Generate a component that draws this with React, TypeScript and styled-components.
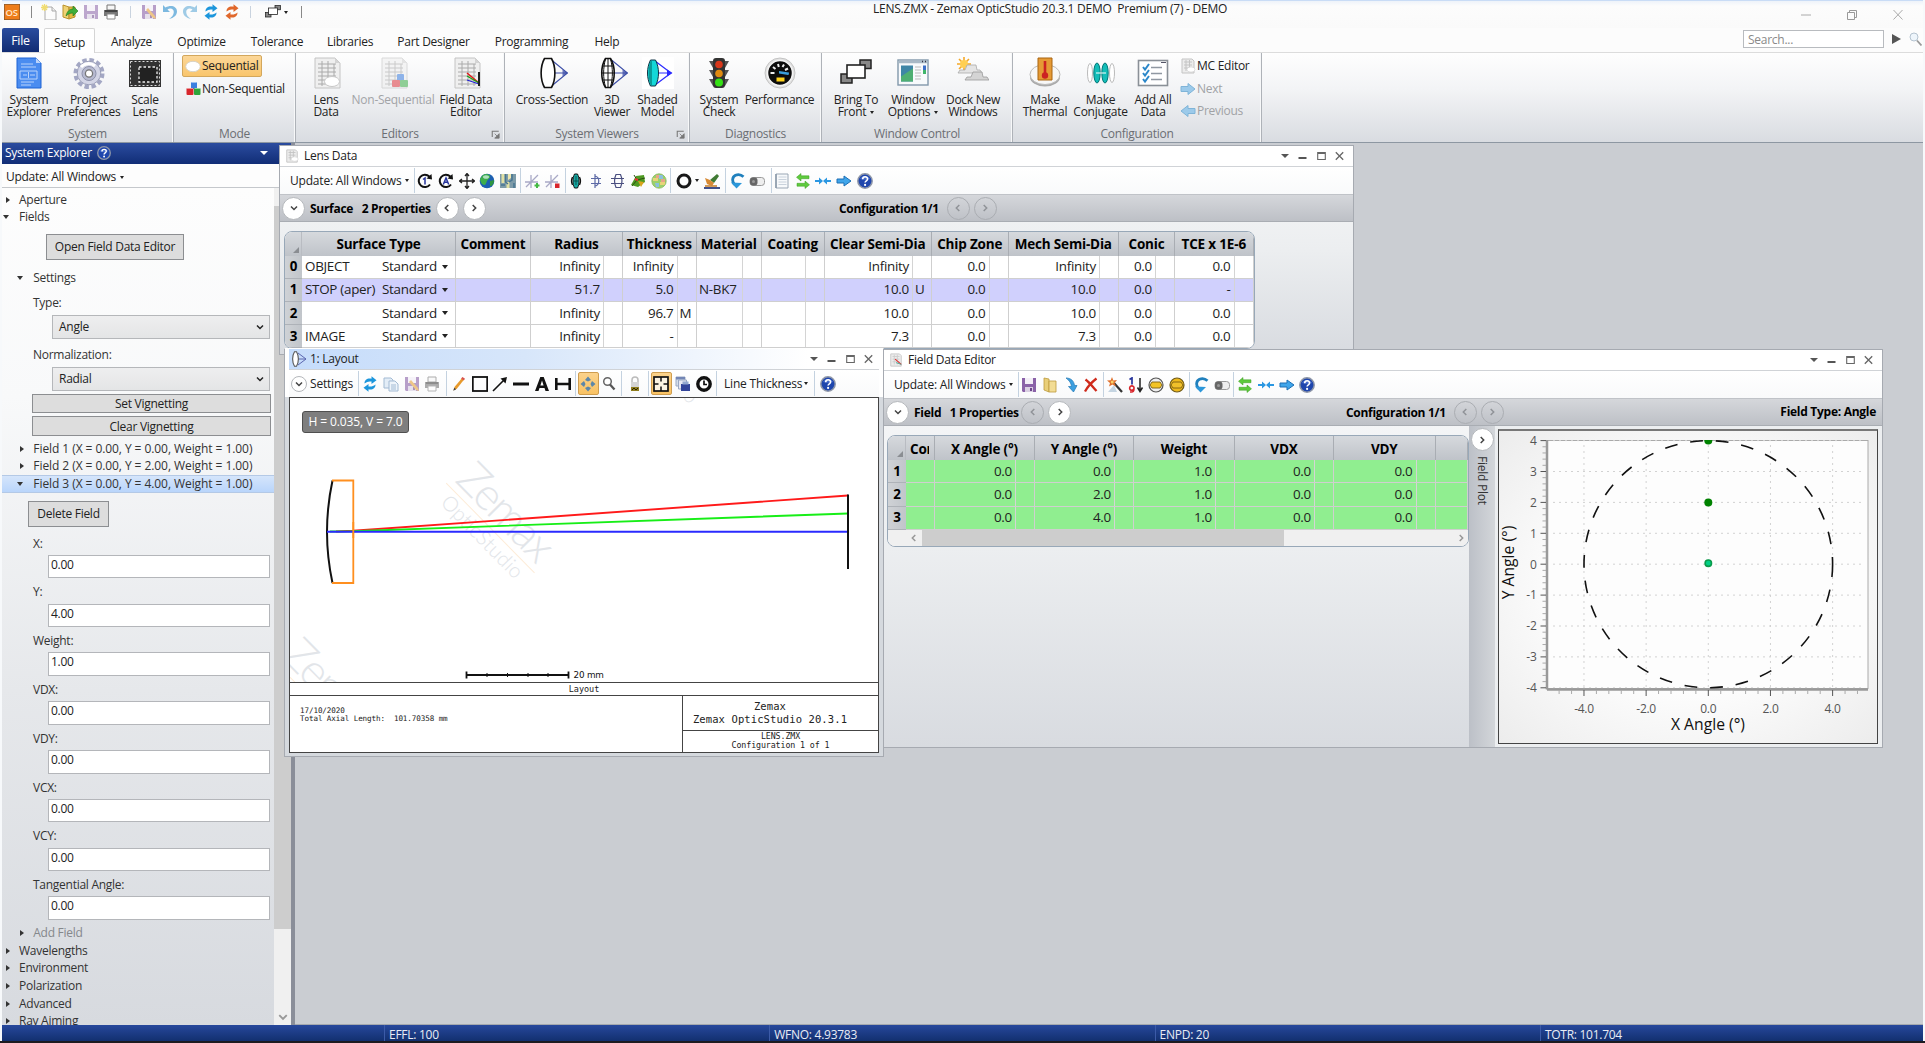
import React from "react";
import styled, { createGlobalStyle, css } from "styled-components";

const Global = createGlobalStyle`
  *, *::before, *::after { box-sizing: border-box; }
  html, body { margin: 0; padding: 0; overflow: hidden; }
  body {
    background: #fff;
    color: #222;
    font-family: "Open Sans", "Noto Sans", sans-serif;
    font-size: 12px;
    letter-spacing: -0.27px;
    line-height: 1;
  }
  svg { display: block; flex: none; }
`;

/* ---------- icons ---------- */

const grid = (
  <>
    <path d="M5 1h20l5 5v25H5z" fill="#efefef" stroke="#c4c4c4" />
    <path d="M25 1l5 5h-5z" fill="#d4d4d4" />
    <path d="M8 7h18M8 11h18M8 15h18M8 19h18M8 23h18M8 27h18M12 4v25M18 4v25M24 7v22" stroke="#aaa" strokeWidth="1" fill="none" />
  </>
);

const disk = (
  <>
    <path d="M1 1h14v14H2l-1-1z" fill="#8a62a8" />
    <path d="M4 1h8v6H4z" fill="#f3eef7" />
    <path d="M4 10h8v5H4z" fill="#d9cfe2" />
    <path d="M9 11h2v3H9z" fill="#6d478b" />
  </>
);

const printer = (
  <>
    <path d="M4 1h8v5H4z" fill="#f6f6f6" stroke="#777" />
    <path d="M1 6h14v6H1z" fill="#777" />
    <path d="M2 6h12v2H2z" fill="#444" />
    <path d="M4 10h8v5H4z" fill="#fff" stroke="#888" />
  </>
);

const refreshPair = (c: string) => (
  <g fill={c}>
    <path d="M2.500 7.500C2.500 3.500 6 1.800 9.500 2.800V.3L14.500 4.300 9.500 8V5.600C7 5 5 5.600 2.500 7.500z" />
    <path d="M13.500 8.500C13.500 12.500 10 14.200 6.500 13.200v2.500L1.500 11.700 6.500 8v2.400C9 11 11 10.400 13.500 8.500z" />
  </g>
);

const turnBack = (
  <>
    <path d="M14.500 3.800C12 1.500 9 1.200 6.500 2.300 3 4 2.800 8.500 5.500 11.500" stroke="#2080bd" strokeWidth="2.800" fill="none" />
    <path d="M2 9.500L13 10 7.500 15.500z" fill="#2c97da" />
  </>
);

const toggle = (
  <>
    <rect x="1" y="4.500" width="14.500" height="8" rx="3" fill="#eee" stroke="#999" />
    <rect x="1" y="4.500" width="7.500" height="8" rx="3" fill="#666" />
    <circle cx="4.500" cy="8.500" r="1.500" fill="#999" />
  </>
);

const lensRays = (c: string) => (
  <g stroke={c} fill="none">
    <path d="M12 3l16 13-16 13M12 16h16" strokeWidth="1.200" />
    <path d="M23 12.500l5.500 3.500-5.500 3.500z" fill={c} stroke="none" opacity=".75" />
  </g>
);

const cubes = (
  <>
    <rect x="6" y="1" width="6" height="7" rx="1" fill="#3b7fe0" />
    <rect x="1.500" y="7" width="7" height="7" rx="1" fill="#d8262c" />
    <rect x="9" y="7" width="6.500" height="7" rx="1" fill="#2fa53b" />
    <path d="M2 7.500h6M9.500 7.500h5.500M6.500 1.500h5" stroke="#fff" opacity=".5" />
  </>
);

const help = (
  <>
    <circle cx="8" cy="8" r="7.200" fill="#1f46ad" stroke="#8f97a8" strokeWidth="1.500" />
    <path d="M3 6a5.500 5 0 0 1 10 0c-3 1-7 1-10 0z" fill="#5b80da" opacity=".7" />
    <path d="M5.700 6.200c0-3.200 4.900-3.100 4.900-.2 0 1.800-2.500 1.800-2.500 3.600" stroke="#fff" strokeWidth="1.600" fill="none" />
    <circle cx="8.100" cy="11.900" r="1.100" fill="#fff" />
  </>
);

const swirl = (
  <>
    <path d="M12.300 3.500A6.200 6.200 0 1 0 13 11.500" stroke="#111" strokeWidth="2" fill="none" />
    <path d="M9.500 5.500L15 6.500 14.500 1z" fill="#111" />
  </>
);

const windowsStack = (
  <>
    <rect x="20" y="3" width="11" height="8.500" fill="#888" stroke="#222" strokeWidth="1.500" />
    <rect x="1" y="17" width="11" height="9" fill="#888" stroke="#222" strokeWidth="1.500" />
    <rect x="7" y="8" width="18" height="13" fill="#fff" stroke="#222" strokeWidth="1.600" />
  </>
);

const I32: Record<string, React.ReactNode> = {
  explorer: (
    <>
      <path d="M4 1h19l5 5v25H4z" fill="#4a8cf0" stroke="#1d62d4" />
      <path d="M23 1v5h5z" fill="#bcd4fa" />
      <path d="M8 7h12M8 10h15M7 14h17v8H7zM10 18h4m3 0h5M15.500 15v6M8 25h13M8 28h10" stroke="#b9d3fb" fill="none" />
    </>
  ),
  gear: (
    <>
      <circle cx="16" cy="16.500" r="13.500" fill="none" stroke="#a3a7c4" strokeWidth="4" strokeDasharray="4.400 2.668" />
      <circle cx="16" cy="16" r="11.800" fill="#d3d5e6" stroke="#9a9eb8" />
      <path d="M8 10a10 10 0 0 1 14-1" stroke="#fff" strokeWidth="3" fill="none" />
      <circle cx="16" cy="16.500" r="7" fill="#b7bad0" stroke="#8d91ab" />
      <circle cx="16" cy="16.500" r="3.600" fill="#fff" stroke="#777" strokeWidth="1.300" />
    </>
  ),
  scale: (
    <>
      <rect x="0" y="3" width="32" height="27" fill="#333" />
      <rect x="1.500" y="4.500" width="29" height="24" fill="none" stroke="#ddd" strokeDasharray="2 2" />
      <rect x="10" y="10" width="18" height="15" fill="#222" stroke="#eee" strokeWidth="1.300" strokeDasharray="2.500 2" />
    </>
  ),
  lensData: (
    <>
      {grid}
      <ellipse cx="22" cy="24.500" rx="7.500" ry="5" fill="#fff" stroke="#c8c8c8" />
    </>
  ),
  nsData: (
    <g opacity=".6">
      {grid}
      <rect x="20" y="17" width="7" height="7" rx="1" fill="#4a86e0" />
      <rect x="15" y="23" width="8" height="7" rx="1" fill="#e0464c" />
      <rect x="23" y="23" width="8" height="7" rx="1" fill="#4db556" />
    </g>
  ),
  fieldData: (
    <>
      {grid}
      <path d="M17 16l12 10" stroke="#e01818" strokeWidth="1.600" />
      <path d="M17 19l12 7" stroke="#18a018" strokeWidth="1.400" />
      <path d="M17 23l12 4" stroke="#2020d0" strokeWidth="1.200" />
      <path d="M29 15v14" stroke="#222" strokeWidth="2" />
    </>
  ),
  cross: (
    <g transform="translate(3.500 0)">
      {lensRays("#3d4fa8")}
      <path d="M5 1.500h7c4.500 8 4.500 21 0 29H5c-4.500-8-4.500-21 0-29z" fill="#fff" stroke="#111" strokeWidth="1.600" />
    </g>
  ),
  viewer3d: (
    <g transform="translate(3.500 0)">
      {lensRays("#3d4fa8")}
      <path d="M6 1.500h5c5 8 5 21 0 29H6c-5-8-5-21 0-29z" fill="#fff" stroke="#111" strokeWidth="1.600" />
      <path d="M6 2c-2.500 9-2.500 19 0 28M11 2c2.500 9 2.500 19 0 28M2.500 9h12M2 16h13M2.500 23h12M8.500 2v28" stroke="#111" fill="none" />
    </g>
  ),
  shaded: (
    <>
      <rect x="0" y="0" width="32" height="32" fill="#fff" />
      <path d="M13 4l16 12-16 12M13 16h16" stroke="#2a2aff" strokeWidth="1.200" fill="none" />
      <path d="M25 12.500l5.500 3.500-5.500 3.500z" fill="#2a2aff" />
      <path d="M8.500 3h5c4 8 4 18 0 26h-5C4.500 21 4.500 11 8.500 3z" fill="#14d8d8" stroke="#134" />
      <path d="M8.500 4c-2.500 8-2.500 16 0 24h1.500V4z" fill="#0b9b99" />
    </>
  ),
  traffic: (
    <>
      <path d="M6 4h20l-4 7H10zM6 13h20l-4 7H10zM6 22h20l-4 7H10z" fill="#555" />
      <rect x="10" y="1" width="12" height="30" rx="3" fill="#333" />
      <circle cx="16" cy="7.500" r="3.800" fill="#d8381c" />
      <circle cx="16" cy="16.500" r="3.800" fill="#e08a10" />
      <circle cx="16" cy="25.500" r="4" fill="#35e015" />
    </>
  ),
  gauge: (
    <>
      <circle cx="16" cy="16" r="15" fill="#e2e2e2" stroke="#c4c4c4" />
      <circle cx="16" cy="16" r="12.500" fill="#0c0c0c" stroke="#f5f5f5" strokeWidth="1.500" />
      <path d="M6.500 16h4M9 10l2.500 2M14 7l.8 3M20 7.500L18.500 10M24 11.500l-3 1.500" stroke="#eee" strokeWidth="2" />
      <path d="M15 14l10 1.500c0 2-.5 2.500-1 2.500l-9-1.500z" fill="#3a9dd8" />
      <rect x="12.500" y="20.500" width="8" height="4" fill="#ffd21a" />
    </>
  ),
  front: windowsStack,
  winOptions: (
    <>
      <rect x="1" y="3" width="30" height="25" fill="#f8fafc" stroke="#8298ab" strokeWidth="1.400" />
      <path d="M1.500 5h29" stroke="#a9b9c6" strokeWidth="2.500" />
      <path d="M25 4.500h1m2 0h1" stroke="#334" strokeWidth="1.500" />
      <rect x="4" y="8.500" width="12" height="16" fill="#3f86a6" />
      <path d="M4 24.500v-5l12-8v13z" fill="#4faf72" />
      <path d="M18 10h6M18 13h6M18 16h6M18 19h6M18 22h6" stroke="#bbb" />
      <path d="M26 8.500h3v8h-3z" fill="#3d6fc8" />
      <path d="M26 13h3v4h-3z" fill="#3fb56a" />
    </>
  ),
  dock: (
    <>
      <path d="M7 0v14M0 7h14M2 2l10 10M12 2L2 12" stroke="#f5a928" strokeWidth="1.600" />
      <circle cx="7" cy="7" r="4" fill="#ffcf52" />
      <path d="M1 16l2-3h5l2-5h9l1 5h3l2 3z" fill="#e4e4e4" stroke="#aaa" strokeWidth=".8" />
      <path d="M8 23l2-3h4l2-5h9l1 5h4l2 3z" fill="#d4d4d4" stroke="#999" strokeWidth=".8" />
    </>
  ),
  thermal: (
    <>
      <ellipse cx="16" cy="20" rx="15" ry="9.500" fill="#aaa" />
      <ellipse cx="16" cy="17.500" rx="15" ry="10" fill="#f7f7f7" stroke="#bbb" />
      <path d="M9 1h14v22H9z" fill="#e59a35" stroke="#a96410" />
      <path d="M16 4v14" stroke="#c22" strokeWidth="2.600" />
      <circle cx="16" cy="18.500" r="3.200" fill="#c22" />
    </>
  ),
  conjugate: (
    <g stroke="#999">
      <ellipse cx="5" cy="16" rx="2.500" ry="9.500" fill="#fff" stroke="#bbb" />
      <ellipse cx="12" cy="16" rx="3.200" ry="10" fill="#12bdb8" stroke="#077" />
      <ellipse cx="20" cy="16" rx="3.200" ry="10" fill="#12bdb8" stroke="#077" />
      <ellipse cx="27" cy="16" rx="2.500" ry="9.500" fill="#fff" stroke="#bbb" />
      <path d="M11 16h10" stroke="#fff" />
    </g>
  ),
  addAll: (
    <>
      <rect x="1.500" y="3.500" width="29" height="25" fill="#fff" stroke="#8a9097" strokeWidth="1.600" />
      <path d="M24 5.500h5" stroke="#556" />
      <path d="M14 10.500h11M14 16.500h11M14 22.500h11" stroke="#9098a2" strokeWidth="1.400" />
      <path d="M6 10l2 2.500L12 7M6 16l2 2.500L12 13M6 22l2 2.500L12 19" stroke="#2b87c9" strokeWidth="2" fill="none" />
    </>
  ),
};

const I16: Record<string, React.ReactNode> = {
  logo: (
    <>
      <rect width="16" height="16" fill="#ee7d1a" stroke="#8c5a2a" strokeWidth="1.500" />
      <text x="1.600" y="11.600" fontSize="9.500" fontWeight="600" fill="#ffe6c8">OS</text>
    </>
  ),
  newDoc: (
    <>
      <path d="M4 3h7l4 4v9H4z" fill="#fcfcfc" stroke="#aaa" />
      <path d="M11 3v4h4" fill="#eee" stroke="#aaa" />
      <path d="M3.500 0v7M0 3.500h7M1 1l5 5M6 1L1 6" stroke="#f0dc70" strokeWidth="1.300" />
    </>
  ),
  open: (
    <>
      <path d="M1 1l6 2v12l-6-2z" fill="#f0d273" stroke="#b9922e" />
      <path d="M7 3h6v10l-6 2z" fill="#e2b93f" stroke="#b9922e" />
      <path d="M4 12c1-5 4-7 7-7V2l5 5-5 5V9c-3 0-5 1-7 3z" fill="#3fae3a" stroke="#23781f" strokeWidth=".6" />
    </>
  ),
  disk,
  diskFaded: <g opacity=".55">{disk}</g>,
  diskPen: (
    <g opacity=".6">
      {disk}
      <path d="M7 4l7 8 1 3-3-1-7-8z" fill="#e7a33c" />
    </g>
  ),
  printer,
  printerFaded: <g opacity=".6">{printer}</g>,
  undo: <path d="M1 1v7h7L5.500 5.500c3-2 6.300-.5 6.300 2.500 0 3-2 5-4.800 7 5-1 8-4 8-7.500C15 2 8.500.5 3.500 3.500z" fill="#7db9e0" />,
  redo: <path d="M15 1v7H8l2.500-2.500c-3-2-6.300-.5-6.300 2.500 0 3 2 5 4.800 7-5-1-8-4-8-7.500C1 2 7.500.5 12.500 3.500z" fill="#9fcbe6" />,
  refresh: refreshPair("#1c96dc"),
  refreshOrange: refreshPair("#e0682c"),
  stack: <g transform="scale(.5)">{windowsStack}</g>,
  cloud: <ellipse cx="8" cy="8.500" rx="7.300" ry="5.200" fill="#fff" stroke="#d8d2c4" />,
  cubes,
  help,
  sheet: (
    <>
      <path d="M2 1h10l2 2v12H2z" fill="#ececec" stroke="#c4c4c4" />
      <path d="M4 4h8M4 7h8M4 10h8M6 2v11M9.500 2v11" stroke="#c4c4c4" />
      <ellipse cx="11" cy="11.500" rx="4" ry="2.600" fill="#fff" stroke="#ccc" strokeWidth=".6" />
    </>
  ),
  sheetField: (
    <>
      <path d="M2 1h10l2 2v12H2z" fill="#ececec" stroke="#c6c6c6" />
      <path d="M4 4h8M4 7h8M4 10h8M6 2v11M9.500 2v11" stroke="#ccc" />
      <path d="M7 7l7 6" stroke="#e03030" strokeWidth="1.300" />
      <path d="M8 11l6 2" stroke="#4a9" />
    </>
  ),
  swirl1: (
    <>
      {swirl}
      <path d="M6 6.500l2-1.500v6.500" stroke="#27349c" strokeWidth="1.500" fill="none" />
    </>
  ),
  swirlA: (
    <>
      {swirl}
      <path d="M5.300 11.500L8 5l2.700 6.500M6.300 9.300h3.400" stroke="#27349c" strokeWidth="1.500" fill="none" />
    </>
  ),
  move: <path d="M8 1v14M1 8h14M6 3l2-2.500L10 3M6 13l2 2.500 2-2.500M3 6L.5 8 3 10M13 6l2.500 2-2.500 2" stroke="#222" strokeWidth="1.300" fill="none" />,
  globe: (
    <>
      <circle cx="8" cy="8" r="7.300" fill="#1c5fb2" />
      <path d="M3 3c3-3 7-2 8 0s-2 3-3 5-1 4-3 4-4-4-4-6z" fill="#3eae4c" />
      <path d="M11 8l4-1c0 4-2 6-4 6z" fill="#2f9640" />
      <ellipse cx="7" cy="4" rx="3" ry="1.800" fill="#d6f2e4" opacity=".75" />
    </>
  ),
  contour: (
    <>
      <rect x="0" y="1" width="16" height="14" fill="#7d9ba8" />
      <path d="M3 1v9M8 9v6" stroke="#e0e0a4" strokeWidth="3" />
      <path d="M5.500 1v8l2.500 2M12 1v6l-3 2M14 10v5M1 12h4" stroke="#477591" strokeWidth="1.500" fill="none" />
      <path d="M8 1v6l3-2V1z" fill="#efe8b0" />
    </>
  ),
  axisPlus: (
    <>
      <path d="M0 9h13M6 2v13M1 14L13 2" stroke="#a9a9c6" strokeWidth="1.300" />
      <path d="M9.500 12.500h5M12 10v5" stroke="#44b944" strokeWidth="2" />
    </>
  ),
  axisX: (
    <>
      <path d="M0 9h13M6 2v13M1 14L13 2" stroke="#a9a9c6" strokeWidth="1.300" />
      <path d="M10 10.500h4.500v4.500H10z" fill="#d8262c" />
    </>
  ),
  lensTeal: (
    <>
      <path d="M4.500 4c-1.500 3-1.500 5 0 8M11.500 4c1.500 3 1.500 5 0 8" stroke="#111" strokeWidth="1.300" fill="none" />
      <path d="M6.500 1h3c2 4 2 10 0 14h-3c-2-4-2-10 0-14z" fill="#17aaa4" stroke="#111" />
      <path d="M8 3v9M6 8h4" stroke="#0a5553" />
    </>
  ),
  tiltLens: <path d="M6 1v14M6 3c5 1 5 9 0 10M2 5.500h10M2 10.500h10" stroke="#5d6aa6" strokeWidth="1.200" fill="none" />,
  cylLens: <path d="M6 1.500h4.500c1.800 4 1.800 9 0 13H6c-1.800-4-1.800-9 0-13zM1 5.500h13M1 10.500h13" stroke="#4a4f80" strokeWidth="1.200" fill="none" />,
  prism: (
    <>
      <path d="M1 12L6 3l8-1 1 7-7 5z" fill="#4e9a22" />
      <path d="M4 2l3 5-5 6M7 7l8-2" stroke="#284f10" fill="none" />
      <path d="M8 8l6 1-3 5z" fill="#d8a41c" />
      <path d="M5 6l3 1" stroke="#e33" strokeWidth="2" />
    </>
  ),
  mosaic: (
    <>
      <circle cx="8" cy="8" r="7.200" fill="#9bd16a" />
      <path d="M2 5h5v3H2zM9 9h5v3H9z" fill="#e8d478" />
      <path d="M8 2h4v4H8zM4 10h4v4H5z" fill="#8cc0dd" />
      <path d="M5 2h3v3H5zM10 6h4v3h-4z" fill="#e8a488" />
      <circle cx="8" cy="8" r="7.200" fill="none" stroke="#86b85a" strokeWidth=".8" />
    </>
  ),
  ring: <circle cx="8" cy="8" r="6" fill="none" stroke="#181818" strokeWidth="3" />,
  brush: (
    <>
      <path d="M6 7l7-6 2 2-5 7z" fill="#3f7a33" />
      <path d="M1 5l5 2 4 3-2 3-5-2z" fill="#d78a35" />
      <path d="M0 15h16" stroke="#2c3d7c" strokeWidth="1.800" />
      <path d="M1 13h12" stroke="#c98232" strokeWidth="1.600" />
    </>
  ),
  turnBack,
  toggle,
  page: (
    <>
      <path d="M2 1h12v14H2z" fill="#f7f9fb" stroke="#9aa7b5" />
      <path d="M4.500 4h8M4.500 6.500h8M4.500 9h8M4.500 11.500h8" stroke="#c9d2dc" />
      <path d="M2 1v14" stroke="#8a98a8" strokeWidth="1.500" />
    </>
  ),
  swap: (
    <g fill="#5fcb3e" stroke="#3a9b20" strokeWidth=".5">
      <path d="M6 .5v2.300h8v2.900H6V8L1.500 4.300z" />
      <path d="M10 8v2.300H2v2.900h8v2.300l4.500-3.700z" />
    </g>
  ),
  inward: (
    <g fill="#2a97e2">
      <path d="M0 7h4V4.500l4 3.500-4 3.500V9H0zM16 7h-4V4.500L8 8l4 3.500V9h4z" />
    </g>
  ),
  right: <path d="M1 6h7V3l7 5-7 5v-3H1z" fill="#3fa5ea" stroke="#1c6fb5" />,
  copy: (
    <g opacity=".75">
      <path d="M1 2h7l2 2v8H1z" fill="#dbe8f5" stroke="#86a5c6" />
      <path d="M6 5h6l3 3v7H6z" fill="#eaf2fa" stroke="#86a5c6" />
      <path d="M8 9h5M8 11h5M8 13h5" stroke="#86a5c6" />
    </g>
  ),
  pencil: (
    <>
      <path d="M3.500 11L11.500 1.500l2 1.500-7.500 9.500-3.500 2z" fill="#e79a2c" />
      <path d="M11.500 1l2.500 1.800-1.300 1.700-2.600-1.900z" fill="#d9534f" />
      <path d="M2.300 14.800l.9-3 2 1.500z" fill="#444" />
    </>
  ),
  rect: <rect x=".8" y="1" width="14.400" height="14" fill="none" stroke="#111" strokeWidth="1.800" />,
  arrowLine: (
    <>
      <path d="M1 15L12 4" stroke="#111" strokeWidth="1.600" />
      <path d="M15 1L8.500 2.500l5 5z" fill="#111" />
    </>
  ),
  line: <path d="M0 8h16" stroke="#111" strokeWidth="3" />,
  bigA: <path d="M1 15L6.300 1h3.400L15 15h-3.500l-1-3h-5l-1 3zM6.400 9.500h3.200L8 4.500z" fill="#111" fillRule="evenodd" />,
  dim: <path d="M1.300 2v12M14.700 2v12M2 8h12" stroke="#111" strokeWidth="2.600" />,
  pan: (
    <g fill="#5d87a8">
      <path d="M8 .5l3 3.500-3 1.500L5 4zM8 15.500l3-3.500-3-1.500L5 12zM.5 8L4 5l1.500 3L4 11zM15.500 8L12 5l-1.500 3 1.500 3z" />
    </g>
  ),
  mag: (
    <>
      <circle cx="6.500" cy="5.500" r="3.800" fill="#fff" stroke="#666" strokeWidth="1.500" />
      <path d="M9 8.500l4.500 5" stroke="#555" strokeWidth="2.300" />
    </>
  ),
  lock: (
    <>
      <path d="M5 7V4c0-4 6-4 6 0v3" fill="none" stroke="#bbb" strokeWidth="1.500" />
      <rect x="4" y="6" width="8" height="5" fill="#d4d4d4" />
      <rect x="4" y="11" width="8" height="4" fill="#8f7d1e" />
      <path d="M5 14l2-2 2 2 2-2" stroke="#2a2400" fill="none" />
    </>
  ),
  fit: (
    <>
      <rect x="1" y="1" width="14" height="14" fill="#fbf3e2" stroke="#111" strokeWidth="1.700" />
      <path d="M8 1v4.500M8 15v-4.500M1 8h4.500M15 8h-4.500" stroke="#111" strokeWidth="1.500" />
    </>
  ),
  cascade: (
    <>
      <path d="M1 1h9v9H1z" fill="#d5deeb" stroke="#9aa8c4" />
      <path d="M1 1h9v2.500H1z" fill="#7386b5" />
      <path d="M3.500 4h8v9h-8z" fill="#e8e8f2" stroke="#9aa8c4" />
      <path d="M6 8h9v7H6z" fill="#33449a" />
      <path d="M7.500 5.500h6v3h-6z" fill="#93a7cf" />
    </>
  ),
  clockBack: (
    <>
      <circle cx="8" cy="8" r="6.200" fill="#fff" stroke="#111" strokeWidth="3.400" />
      <path d="M8 4.500V8.500h3" stroke="#111" strokeWidth="1.700" fill="none" />
    </>
  ),
  folder: (
    <>
      <path d="M2 1l5 1v13l-5-2z" fill="#e9cf79" stroke="#bd9a3e" strokeWidth=".8" />
      <path d="M7 4h7v11H7z" fill="#f2dc94" stroke="#bd9a3e" strokeWidth=".8" />
    </>
  ),
  downCurve: <path d="M3 1c5 0 8 3 8.500 7.500H14L10.500 15 5.500 9.500h3C8 6 6.500 3.500 3 1z" fill="#3b9fe0" stroke="#2278b4" strokeWidth=".7" />,
  redX: <path d="M2.500 2.500c4 3 7 7 11 11.500M13.500 1.500C9 5 5 9 2 14.500" stroke="#cf2a1b" strokeWidth="2.300" fill="none" />,
  wand: (
    <>
      <path d="M1 15l6-7 3 7z" fill="#c5d5e2" />
      <path d="M7 6l8 9" stroke="#333" strokeWidth="2.200" />
      <path d="M5 0l1.300 3.500L10 3 7.500 6 9 9.500 5.500 7.500 2 9.500 3 6 0 3.500l3.700-.2z" fill="#e0702b" />
      <circle cx="5.200" cy="5" r="1.500" fill="#f9d36a" />
    </>
  ),
  sort: (
    <>
      <path d="M1.500 2.500L4 .9V7.500" stroke="#27349c" strokeWidth="1.700" fill="none" />
      <path d="M2 15h1.500C5.500 15 6 13 6 11.500A2.200 2.200 0 1 0 3.800 13.300 2.200 2.200 0 0 0 6 11" stroke="#d8262c" strokeWidth="1.600" fill="none" />
      <path d="M12 1v13M9.500 10.500L12 14.500l2.500-4" stroke="#222" strokeWidth="1.500" fill="none" />
    </>
  ),
  pupil: (
    <>
      <circle cx="8" cy="8" r="7" fill="#eee" stroke="#555" strokeWidth="1.200" />
      <path d="M4 5h8l2 3-2 3H4L2 8z" fill="#f2c324" stroke="#7a5f10" strokeWidth=".9" />
    </>
  ),
  pupilFull: (
    <>
      <circle cx="8" cy="8" r="7" fill="#eeb91c" stroke="#6f5a1a" strokeWidth="1.200" />
      <path d="M4 5h8l2 3-2 3H4L2 8z" fill="#f0c02a" stroke="#7a5f10" strokeWidth=".9" />
    </>
  ),
  nextArrow: <path d="M1 5.500h7V2.500l7 5.500-7 5.500v-3H1z" fill="#9ccaea" stroke="#7fb4d8" />,
  prevArrow: <path d="M15 5.500H8V2.500L1 8l7 5.500v-3h7z" fill="#9ccaea" stroke="#7fb4d8" />,
  layout: (
    <>
      <path d="M7 2l8 6-8 6M7 8h8" stroke="#5b66b0" fill="none" />
      <path d="M3.500.8h2c2.500 4 2.500 10.400 0 14.400h-2c-2.500-4-2.500-10.400 0-14.400z" fill="#fff" stroke="#555" strokeWidth="1.100" />
    </>
  ),
  launcher: (
    <>
      <path d="M4 11V4h8" stroke="#777" fill="none" strokeWidth="1.300" />
      <path d="M7 7l5 5M12.500 7v5.500H7z" stroke="#777" fill="#777" />
    </>
  ),
};

const Icon = ({ n, s = 16 }: { n: string; s?: number }) =>
  I32[n] ? (
    <svg width={s} height={s} viewBox="0 0 32 32">{I32[n]}</svg>
  ) : (
    <svg width={s} height={s} viewBox="0 0 16 16">{I16[n]}</svg>
  );

/* ---------- shared parts ---------- */

const Caret = styled.i<{ $c?: string; $s?: number }>`
  width: 0;
  height: 0;
  flex: none;
  border: ${(p) => p.$s ?? 3}px solid transparent;
  border-top: ${(p) => (p.$s ?? 3) + 0.5}px solid ${(p) => p.$c ?? "#222"};
  border-bottom: 0;
`;

const Sep = styled.i<{ $m?: string }>`
  width: 1px;
  height: 25px;
  flex: none;
  margin: ${(p) => p.$m ?? "0"};
  background: #c4d2e0;
`;

const Tool = styled.span<{ $w?: number; $on?: boolean }>`
  width: ${(p) => p.$w ?? 20.7}px;
  height: 23px;
  flex: none;
  display: flex;
  align-items: center;
  justify-content: center;
  ${(p) => p.$on && css`
    border: 1px solid #cf9d4f;
    border-radius: 2px;
    background: linear-gradient(#fbd28b, #f9c263);
  `}
`;

const Round = styled.span<{ $off?: boolean; $s?: number }>`
  width: ${(p) => p.$s ?? 23}px;
  height: ${(p) => p.$s ?? 23}px;
  flex: none;
  display: flex;
  align-items: center;
  justify-content: center;
  border-radius: 50%;
  border: 1px solid ${(p) => (p.$off ? "#aaadb2" : "#b4b7bb")};
  background: ${(p) => (p.$off ? "transparent" : "#fff")};
  color: ${(p) => (p.$off ? "#909398" : "#444")};
`;

const Chevron = ({ dir, s = 8 }: { dir: "left" | "right" | "down"; s?: number }) => (
  <svg width={s} height={s} viewBox="0 0 8 8">
    <path
      d={{ left: "M5.300 1L2.300 4l3 3", right: "M2.700 1l3 3-3 3", down: "M1 2.500l3 3 3-3" }[dir]}
      fill="none"
      stroke="currentColor"
      strokeWidth="1.500"
    />
  </svg>
);

/* ---------- application frame ---------- */

const Frame = styled.div`
  width: 1925px;
  height: 1043px;
  padding: 0 2px;
  display: flex;
  flex-direction: column;
  overflow: hidden;
  background: linear-gradient(#f7f9fb 0 1041px, #1d1b20 1041px);
`;

const TitleBar = styled.header`
  height: 28px;
  flex: none;
  display: grid;
  grid-template-columns: 871px 1fr 161px;
  align-items: start;
  border-top: 1px solid #c9dcf6;
  background: linear-gradient(#eef3fa, #fcfcfc 5px, #fafafa);
`;

const QuickBar = styled.div`
  height: 22px;
  display: flex;
  align-items: center;
  padding-left: 2px;
`;

const QuickSep = styled.i<{ $m: string; $dark?: boolean }>`
  width: 1px;
  height: 12px;
  margin: ${(p) => p.$m};
  background: ${(p) => (p.$dark ? "#888" : "#c9d3df")};
`;

const Title = styled.h1`
  margin: 0;
  padding-top: 2px;
  font-size: 12px;
  font-weight: 400;
  white-space: pre;
  letter-spacing: -0.24px;
`;

const WindowKeys = styled.div`
  display: flex;
  gap: 34px;
  padding: 8px 0 0 38px;
`;

const Tabs = styled.nav`
  height: 25px;
  flex: none;
  display: flex;
  align-items: flex-end;
  background: #fcfcfc;
  border-bottom: 1px solid #dcdcdc;
`;

const Tab = styled.span<{ $w: number; $kind?: "file" | "on" }>`
  width: ${(p) => p.$w}px;
  height: 24px;
  flex: none;
  display: flex;
  align-items: center;
  justify-content: center;
  padding-top: 3px;
  ${(p) => p.$kind === "file" && css`
    margin-right: 5px;
    background: linear-gradient(#2a4d9f, #112c73);
    color: #fff;
    font-size: 12.500px;
    border-radius: 2px 2px 0 0;
  `}
  ${(p) => p.$kind === "on" && css`
    border: 1px solid #d5d5d5;
    border-bottom: 0;
    border-radius: 2px 2px 0 0;
    background: #fff;
    height: 25px;
    margin-bottom: -1px;
  `}
`;

const Search = styled.div`
  display: flex;
  align-items: center;
  gap: 8px;
  margin-left: auto;
  padding: 0 1px 4px 0;
`;

const SearchBox = styled.div`
  width: 141px;
  height: 18px;
  padding: 3px 4px;
  border: 1px solid #b8bbbf;
  background: #fff;
  color: #8a8a8a;
`;

const Play = styled.i`
  border: 5px solid transparent;
  border-left: 9px solid #555;
  border-right: 0;
`;

const Ribbon = styled.section`
  height: 90px;
  flex: none;
  display: flex;
  border-bottom: 1px solid #8d97a2;
  background: linear-gradient(#fefefe, #f3f4f6 40%, #d9dce1);
`;

const Group = styled.div<{ $w: number }>`
  width: ${(p) => p.$w}px;
  flex: none;
  display: grid;
  grid-template-rows: 74px 14px;
  border-right: 1px solid #aeb2b8;
  box-shadow: inset -1px 0 #f7f8f9;
`;

const GroupBody = styled.div<{ $pad?: number }>`
  display: flex;
  padding: 4px 0 0 ${(p) => p.$pad ?? 0}px;
`;

const GroupName = styled.div`
  display: flex;
  justify-content: center;
  align-items: center;
  color: #6b6e73;
  position: relative;
`;

const Launcher = styled.span`
  position: absolute;
  right: 2px;
  bottom: 0;
`;

const Big = styled.div<{ $w: number; $off?: boolean }>`
  width: ${(p) => p.$w}px;
  flex: none;
  display: flex;
  flex-direction: column;
  align-items: center;
  gap: 4.500px;
  color: ${(p) => (p.$off ? "#a2a4a7" : "#222")};
`;

const BigText = styled.span`
  text-align: center;
  line-height: 12.700px;
  white-space: pre;
`;

const InlineCaret = styled(Caret)`
  display: inline-block;
  vertical-align: 2px;
  margin-left: 4px;
`;

const SmallCol = styled.div`
  display: flex;
  flex-direction: column;
  margin-top: -2px;
  gap: 0.700px;
`;

const Small = styled.div<{ $on?: boolean; $off?: boolean }>`
  height: 22px;
  display: flex;
  align-items: center;
  gap: 1px;
  padding: 0 3px 0 2px;
  white-space: nowrap;
  border: 1px solid transparent;
  color: ${(p) => (p.$off ? "#a0a2a5" : "#222")};
  ${(p) => p.$on && css`
    width: 80px;
    border-color: #d3a75c;
    border-radius: 2px;
    background: linear-gradient(#fcd798, #f9c56c);
  `}
`;

/* ---------- main area ---------- */

const Main = styled.div`
  height: 882px;
  flex: none;
  display: flex;
`;

const Side = styled.aside`
  width: 289px;
  flex: none;
  display: flex;
  flex-direction: column;
`;

const SideHead = styled.div`
  height: 21px;
  flex: none;
  display: flex;
  align-items: center;
  gap: 5px;
  padding: 0 23px 1px 3px;
  background: linear-gradient(#2b4c9f, #112d76);
  color: #fff;
`;

const HeadText = styled.span`
  letter-spacing: -0.25px;
`;

const Push = styled.i`
  margin-left: auto;
`;

const SideUpdate = styled.div`
  height: 24px;
  flex: none;
  display: flex;
  align-items: center;
  gap: 4px;
  padding: 3px 0 0 4px;
  background: #fdfdfd;
  border-bottom: 1px solid #c5c8cc;
`;

const SideBody = styled.div`
  flex: 1;
  min-height: 0;
  display: flex;
  background: linear-gradient(#fdfdfd, #f8f9fa 25%, #e6e8eb 60%, #d7dadf);
`;

const Tree = styled.div`
  width: 272px;
  flex: none;
  overflow: hidden;
  padding-top: 3px;
`;

const Node = styled.div<{ $lvl: number; $on?: boolean; $dim?: boolean; $mt?: number; $ls?: number }>`
  height: 17.600px;
  display: flex;
  align-items: center;
  margin-top: ${(p) => p.$mt ?? 0}px;
  padding-left: ${(p) => 2.500 + p.$lvl * 14.300}px;
  color: ${(p) => (p.$dim ? "#85888c" : "#333")};
  letter-spacing: ${(p) => p.$ls ?? -0.27}px;
  white-space: nowrap;
  ${(p) => p.$on && css`
    background: linear-gradient(#d5e5fb, #b9d5fb);
    border-top: 1px solid #b4c9e6;
    border-bottom: 1px solid #b4c9e6;
  `}
`;

const Twist = styled.i<{ $open?: boolean }>`
  width: 14.500px;
  flex: none;
  &::before {
    content: "";
    display: block;
    width: 0;
    border: 3.500px solid transparent;
    ${(p) => p.$open
      ? css`border-top: 4px solid #333; border-bottom: 0; margin-left: -1.5px;`
      : css`border-left: 4px solid #333; border-right: 0; margin-left: 1.500px;`}
  }
`;

const Btn = styled.div<{ $w: number; $h: number; $m: string }>`
  width: ${(p) => p.$w}px;
  height: ${(p) => p.$h}px;
  margin: ${(p) => p.$m};
  padding-top: 1px;
  display: flex;
  align-items: center;
  justify-content: center;
  border: 1px solid #8c8e91;
  background: #dddddd;
  color: #222;
`;

const Label = styled.div<{ $mt: number }>`
  height: 16px;
  margin: ${(p) => p.$mt}px 0 0 31px;
  line-height: 16px;
  color: #333;
`;

const Select = styled.div<{ $mt: number }>`
  width: 218px;
  height: 24px;
  margin: ${(p) => p.$mt}px 0 0 50px;
  padding: 0 5px 0 6px;
  display: flex;
  align-items: center;
  justify-content: space-between;
  border: 1px solid #b5b7ba;
  background: linear-gradient(#eeeeef, #e4e5e6);
  color: #222;
`;

const Input = styled.div`
  width: 222px;
  height: 23.500px;
  margin: 3.300px 0 0 46px;
  padding: 3px 2px;
  border: 1px solid #b4b6ba;
  background: #fff;
  color: #222;
`;

const Scroll = styled.div`
  width: 17px;
  display: flex;
  flex-direction: column;
  align-items: center;
  background: #f0f0f0;
  padding-top: 18px;
  color: #999;
`;

const Thumb = styled.i`
  width: 17px;
  height: 723px;
  margin-bottom: 83px;
  background: #cdcdcd;
`;

const Splitter = styled.i`
  width: 4px;
  flex: none;
  background: #8a8e99;
`;

const Desk = styled.div`
  flex: 1;
  position: relative;
  background: #cacdd2;
  border-bottom: 1px solid #a4a8ae;
`;

/* ---------- floating windows ---------- */

const Win = styled.section<{ $x: number; $y: number; $w: number; $h: number; $frame?: boolean }>`
  position: absolute;
  left: ${(p) => p.$x - 295}px;
  top: ${(p) => p.$y - 143}px;
  width: ${(p) => p.$w}px;
  height: ${(p) => p.$h}px;
  display: flex;
  flex-direction: column;
  overflow: hidden;
  border: 1px solid #a6aab1;
  background: linear-gradient(#f8f9fa, #eceef0 50%, #d8dbe0);
  ${(p) => p.$frame && css`
    padding: 0 4px 3px 4px;
    border-top-color: #fff;
    background: #d5d9de;
    box-shadow: inset 0 48px #fff;
  `}
`;

const WinTitle = styled.div<{ $active?: boolean }>`
  height: 21px;
  flex: none;
  display: flex;
  align-items: center;
  gap: ${(p) => (p.$active ? 3 : 5)}px;
  padding: ${(p) => (p.$active ? "0 6px 0 2px" : "0 9px 0 5px")};
  background: ${(p) => (p.$active ? "linear-gradient(90deg, #c5dcfb, #d7e6fa 40%, #fff 88%)" : "#fff")};
  border-bottom: 1px solid #d0d3d7;
`;

const Keys = styled.span`
  margin-left: auto;
  display: flex;
  align-items: center;
  gap: 9.300px;
`;

const WinKeys = () => (
  <Keys>
    <Caret $c="#555" $s={4} />
    <svg width="9" height="10"><path d="M.5 7h8" stroke="#555" strokeWidth="2" /></svg>
    <svg width="9" height="10"><path d="M.7 1.500h7.600v7H.7zM.7 2.500h7.600" stroke="#666" strokeWidth="1.100" fill="none" /></svg>
    <svg width="9" height="10"><path d="M.8 1.300l7.400 7.400M8.200 1.300L.8 8.700" stroke="#666" strokeWidth="1.300" /></svg>
  </Keys>
);

const Bar = styled.div<{ $pad?: number }>`
  height: 27px;
  flex: none;
  display: flex;
  align-items: center;
  padding-left: ${(p) => p.$pad ?? 10}px;
  background: linear-gradient(#fff, #f9fafb);
  white-space: nowrap;
`;

const BarText = styled.span<{ $w: number }>`
  width: ${(p) => p.$w}px;
  flex: none;
  letter-spacing: -0.2px;
`;

const Band = styled.div`
  height: 28px;
  flex: none;
  display: flex;
  align-items: center;
  padding: 0 6px 0 2px;
  border-top: 1px solid #c0c3c8;
  border-bottom: 1px solid #a9adb3;
  background: linear-gradient(#d5d7db, #bdc0c6);
  font-weight: 700;
  color: #000;
  letter-spacing: -0.28px;
  white-space: pre;
`;

const BandText = styled.span<{ $w: number; $pl?: number }>`
  width: ${(p) => p.$w}px;
  padding: 1px 0 0 ${(p) => p.$pl ?? 0}px;
  flex: none;
`;

const Gap = styled.i<{ $w: number }>`
  width: ${(p) => p.$w}px;
  flex: none;
`;

/* ---------- tables ---------- */

const Table = styled.div<{ $cols: string; $m: string }>`
  display: grid;
  grid-template-columns: ${(p) => p.$cols};
  width: max-content;
  flex: none;
  margin: ${(p) => p.$m};
  border: 1px solid #98a8b8;
  border-radius: 8px;
  overflow: hidden;
  font-size: 13.400px;
  background: #fff;
`;

const Th = styled.div<{ $clip?: boolean }>`
  height: 24px;
  display: flex;
  align-items: center;
  justify-content: ${(p) => (p.$clip ? "flex-start" : "center")};
  padding: 2px ${(p) => (p.$clip ? 5 : 0)}px 0 ${(p) => (p.$clip ? 4 : 0)}px;
  border-right: 1px solid #a9adb3;
  background: linear-gradient(#d6d9dd, #bfc3c9);
  font-weight: 700;
  font-size: 13.500px;
  letter-spacing: -0.17px;
  white-space: nowrap;
  color: #000;
  overflow: hidden;
`;

const Clip = styled.span`
  overflow: hidden;
  line-height: 18px;
`;

const Corner = styled(Th)`
  align-items: flex-end;
  justify-content: flex-end;
  padding: 0 2px 3px 0;
  border-right-color: #b9bcc2;
`;

const Tri = styled.i`
  border: 3px solid #8a8d92;
  border-top-color: transparent;
  border-left-color: transparent;
`;

const RowNo = styled.div`
  height: 23.100px;
  display: flex;
  align-items: center;
  justify-content: center;
  background: linear-gradient(90deg, #cfd2d6, #c1c5ca);
  border-bottom: 1px solid #aeb2b8;
  font-weight: 700;
  color: #000;
`;

const Td = styled.div<{ $bg: string; $flag: boolean }>`
  height: 23.100px;
  display: grid;
  grid-template-columns: ${(p) => (p.$flag ? "1fr 19px" : "1fr")};
  border-right: 1px solid #cfcfcf;
  border-bottom: 1px solid #cfcfcf;
  background: ${(p) => p.$bg};
`;

const Val = styled.span<{ $left?: boolean }>`
  display: flex;
  align-items: center;
  justify-content: ${(p) => (p.$left ? "flex-start" : "flex-end")};
  padding: 0 3px 0 2.500px;
`;

const Flag = styled.span`
  display: flex;
  align-items: center;
  border-left: 1px solid #d4d4d4;
  padding-left: 2px;
`;

const TypeCell = styled.div<{ $bg: string }>`
  height: 23.100px;
  display: grid;
  grid-template-columns: 77px 60px 1fr;
  align-items: center;
  padding-left: 3px;
  border-right: 1px solid #cfcfcf;
  border-bottom: 1px solid #cfcfcf;
  background: ${(p) => p.$bg};
  white-space: nowrap;
`;

const lensHeads = ["Surface Type", "Comment", "Radius", "Thickness", "Material", "Coating", "Clear Semi-Dia", "Chip Zone", "Mech Semi-Dia", "Conic", "TCE x 1E-6"];
type LensRow = { name: string; vals: string[]; flags: Record<number, string> };
const lensRows: LensRow[] = [
  { name: "OBJECT", vals: ["", "Infinity", "Infinity", "", "", "Infinity", "0.0", "Infinity", "0.0", "0.0"], flags: {} },
  { name: "STOP (aper)", vals: ["", "51.7", "5.0", "N-BK7", "", "10.0", "0.0", "10.0", "0.0", "-"], flags: { 5: "U" } },
  { name: "", vals: ["", "Infinity", "96.7", "", "", "10.0", "0.0", "10.0", "0.0", "0.0"], flags: { 2: "M" } },
  { name: "IMAGE", vals: ["", "Infinity", "-", "", "", "7.3", "0.0", "7.3", "0.0", "0.0"], flags: {} },
];

const LensTable = () => (
  <Table $cols="17px 154px 75px 92px 73.5px 65.5px 62.5px 107.5px 76.5px 110.5px 56px 78.5px" $m="9px 0 0 4px">
    <Corner><Tri /></Corner>
    {lensHeads.map((h) => <Th key={h}>{h}</Th>)}
    {lensRows.map((r, i) => {
      const bg = i === 1 ? "#d0d0fd" : "#fff";
      return (
        <React.Fragment key={i}>
          <RowNo>{i}</RowNo>
          <TypeCell $bg={bg}><span>{r.name}</span><span>Standard</span><Caret $s={3.500} /></TypeCell>
          {r.vals.map((v, j) => (
            <Td key={j} $bg={bg} $flag={j > 0}>
              <Val $left={j === 3}>{v}</Val>
              {j > 0 && <Flag>{r.flags[j]}</Flag>}
            </Td>
          ))}
        </React.Fragment>
      );
    })}
  </Table>
);

const HScroll = styled.div`
  grid-column: 1 / -1;
  height: 16px;
  display: flex;
  align-items: center;
  padding: 0 3px 0 22px;
  background: #f0f0f0;
  color: #999;
`;

const HThumb = styled.i`
  width: 362px;
  height: 16px;
  margin: 0 auto 0 4px;
  background: #cdcdcd;
`;

const fieldRows = [["0.0", "0.0"], ["0.0", "2.0"], ["0.0", "4.0"]];

const FieldTable = () => (
  <Table $cols="18px 29px 100px 99px 101px 99px 101.5px 32px" $m="9.4px 0 0 3px">
    <Corner><Tri /></Corner>
    <Th $clip><Clip>Comment</Clip></Th>
    {["X Angle (°)", "Y Angle (°)", "Weight", "VDX", "VDY", ""].map((h, i) => <Th key={i}>{h}</Th>)}
    {fieldRows.map((r, i) => (
      <React.Fragment key={i}>
        <RowNo>{i + 1}</RowNo>
        <Td $bg="#90ee90" $flag={false} />
        {[r[0], r[1], "1.0", "0.0", "0.0"].map((v, j) => (
          <Td key={j} $bg="#90ee90" $flag><Val>{v}</Val><Flag /></Td>
        ))}
        <Td $bg="#90ee90" $flag={false} />
      </React.Fragment>
    ))}
    <HScroll><Chevron dir="left" /><HThumb /><Chevron dir="right" /></HScroll>
  </Table>
);

const FieldBody = styled.div`
  flex: 1;
  display: flex;
`;

const FieldLeft = styled.div`
  width: 585px;
  flex: none;
`;

const PlotStrip = styled.div`
  width: 26px;
  flex: none;
  display: flex;
  flex-direction: column;
  align-items: center;
  gap: 5px;
  padding-top: 2px;
  background: linear-gradient(90deg, #bcc0c7, #d3d6da);
`;

const Vertical = styled.span`
  writing-mode: vertical-rl;
  color: #333;
  letter-spacing: -0.25px;
`;

const PlotPane = styled.div`
  flex: 1;
  padding: 3px 0 0 3px;
  background: #eceef0;
`;

const PlotFrame = styled.div`
  width: 380px;
  height: 315px;
  border: 1px solid #444;
  border-top: 2px solid #777;
  background: radial-gradient(#ffffff 40%, #ececec);
`;

/* ---------- field plot ---------- */

const fx = (v: number) => 209.300 + v * 31.080;
const fy = (v: number) => 133.200 - v * 30.900;
const ticks = Array.from({ length: 9 }, (_, i) => i - 4);

const FieldPlot = () => (
  <svg width="378" height="312">
    <defs>
      <clipPath id="plotArea"><rect x="49" y="9" width="320" height="249" /></clipPath>
    </defs>
    <rect x="48.500" y="9.500" width="320.500" height="248" fill="#fdfdfd" stroke="#aaa" />
    <g stroke="#d2d2d2" strokeDasharray="2 4" fill="none">
      {ticks.map((t) => <path key={t} d={`M54 ${fy(t)}H366`} />)}
      {[-4, -2, 0, 2, 4].map((t) => <path key={t} d={`M${fx(t)} 14V256`} />)}
    </g>
    <path d="M48 9v249.500" stroke="#999" strokeWidth="2.500" />
    <path d="M48 258.500H369" stroke="#999" strokeWidth="2.500" />
    <g stroke="#999">
      {Array.from({ length: 41 }, (_, i) => -4 + i * 0.2).map((t, i) => (
        <path key={i} d={`M${i % 5 ? 43.500 : 41.500} ${fy(t)}H47`} stroke={i % 5 ? "#aaa" : "#555"} />
      ))}
      {Array.from({ length: 25 }, (_, i) => -4.8 + i * 0.4).map((t, i) => (
        <path key={i} d={`M${fx(t)} 259V${(i + 3) % 5 ? 263 : 265}`} stroke={(i + 3) % 5 ? "#aaa" : "#555"} />
      ))}
    </g>
    <g fontSize="12" fill="#555">
      {ticks.map((t) => <text key={t} x="37.500" y={fy(t) + 4.300} textAnchor="end">{t}</text>)}
      {[-4, -2, 0, 2, 4].map((t) => <text key={t} x={fx(t)} y="282" textAnchor="middle">{t.toFixed(1)}</text>)}
    </g>
    <g fontSize="15.700" fill="#111" textAnchor="middle" letterSpacing="0">
      <text x="209" y="299">X Angle (°)</text>
      <text transform="translate(14.500 131.500) rotate(-90)">Y Angle (°)</text>
    </g>
    <g clipPath="url(#plotArea)">
      <ellipse cx={fx(0)} cy={fy(0)} rx="124.300" ry="123.500" fill="none" stroke="#111" strokeWidth="1.600" strokeDasharray="12.800 12.900" />
      <circle cx={fx(0)} cy={fy(4)} r="4" fill="#008200" />
      <circle cx={fx(0)} cy={fy(2)} r="4" fill="#008200" />
      <circle cx={fx(0)} cy={fy(0) - 1} r="3.200" fill="#00cf86" stroke="#0a9a4a" strokeWidth="1.600" />
    </g>
  </svg>
);

/* ---------- layout drawing ---------- */

const Sheet = styled.div`
  flex: 1;
  display: flex;
  flex-direction: column;
  border: 1px solid #444;
  background: #fff;
  font-family: "DejaVu Sans Mono", monospace;
  color: #222;
`;

const Drawing = styled.div`
  height: 284px;
  flex: none;
  position: relative;
`;

const Readout = styled.div`
  position: absolute;
  left: 12px;
  top: 12.500px;
  width: 107px;
  height: 22px;
  display: flex;
  align-items: center;
  justify-content: center;
  border: 1px solid #4f4f4f;
  border-radius: 3px;
  background: #7e7e7e;
  color: #fff;
  font-family: "Open Sans", sans-serif;
  letter-spacing: -0.1px;
`;

const Caption = styled.div`
  height: 14px;
  flex: none;
  display: flex;
  align-items: center;
  justify-content: center;
  border-top: 1px solid #444;
  border-bottom: 1px solid #444;
  font-size: 8.500px;
  letter-spacing: 0;
`;

const Footer = styled.div`
  flex: 1;
  display: grid;
  grid-template-columns: 393px 1fr;
`;

const Notes = styled.div`
  padding: 10.500px 0 0 10px;
  border-right: 1px solid #444;
  font-size: 7.600px;
  line-height: 8.300px;
  letter-spacing: -0.1px;
  white-space: pre;
`;

const Block = styled.div`
  display: grid;
  grid-template-rows: 34.500px 1fr;
`;

const BlockText = styled.div<{ $big?: boolean }>`
  display: flex;
  flex-direction: column;
  align-items: center;
  justify-content: center;
  padding-right: ${(p) => (p.$big ? 21 : 0)}px;
  font-size: ${(p) => (p.$big ? 10.500 : 8.300)}px;
  line-height: ${(p) => (p.$big ? 13 : 9.500)}px;
  letter-spacing: ${(p) => (p.$big ? 0.1 : -0.1)}px;
  margin-left: ${(p) => (p.$big ? 0 : 0)}px;
  border-bottom: ${(p) => (p.$big ? "1px solid #444" : "0")};
`;

const Mark = ({ x, y }: { x: number; y: number }) => (
  <g transform={`translate(${x} ${y}) rotate(45.500)`} fontFamily="Lato" fill="#e2e5e9">
    <text x="0" y="0" fontSize="45" fontWeight="300" textLength="118">Zemax</text>
    <path d="M-4 7h126" stroke="#fdecd8" />
    <text x="6" y="26" fontSize="20.500" fontWeight="300" textLength="107">OpticStudio</text>
  </g>
);

/* Drawing coordinates are window pixels, shifted to the sheet's origin. */
const LayoutDrawing = () => (
  <svg width="589" height="284" viewBox="290 398 589 284">
    <Mark x={454} y={481} />
    <Mark x={280} y={657} />
    <Mark x={629} y={306} />
    <path d="M332.500 480.500Q321.500 532 332.500 583" stroke="#111" strokeWidth="2" fill="none" />
    <path d="M332 480.500h21.300V583H332" stroke="#ff8f1f" strokeWidth="1.800" fill="none" />
    <path d="M336 531.500L353 530.800 848 495.500" stroke="#ff1a1a" strokeWidth="1.900" fill="none" />
    <path d="M330 531.500L353 531.200 848 513.500" stroke="#17ee17" strokeWidth="1.900" fill="none" />
    <path d="M327 531.800H848" stroke="#2a2aff" strokeWidth="1.900" />
    <path d="M353.300 522v16" stroke="#ff8f1f" strokeWidth="1.800" />
    <path d="M848 494.500V569" stroke="#111" strokeWidth="2" />
    <path d="M466 675H568.500M466.500 671.500v7M568.500 671.500v7" stroke="#111" strokeWidth="1.800" />
    <path d="M487 673v4M507.500 673v4M528 673v4M548 673v4" stroke="#111" />
    <text x="573.500" y="678" fontSize="8.800" fontFamily="DejaVu Sans" fill="#111" letterSpacing="-.2">20 mm</text>
  </svg>
);

/* ---------- page ---------- */

const big = (w: number, icon: string, text: string, opt: { off?: boolean; caret?: boolean } = {}) => (
  <Big key={text} $w={w} $off={opt.off}>
    <Icon n={icon} s={32} />
    <BigText>{text}{opt.caret && <InlineCaret $s={2.500} />}</BigText>
  </Big>
);

const tools = (...names: string[]) => names.map((n) => <Tool key={n}><Icon n={n} /></Tool>);

const params: [string, string][] = [
  ["X:", "0.00"], ["Y:", "4.00"], ["Weight:", "1.00"], ["VDX:", "0.00"], ["VDY:", "0.00"],
  ["VCX:", "0.00"], ["VCY:", "0.00"], ["Tangential Angle:", "0.00"],
];

const Status = styled.footer`
  height: 16px;
  flex: none;
  display: grid;
  grid-template-columns: 382px repeat(4, 385.300px);
  overflow: hidden;
  background: linear-gradient(#27489c, #12306f);
  color: #e8ecf5;
`;

const StatusItem = styled.span`
  padding: 4px 0 0 4px;
  border-left: 1px solid #3c5ba8;
`;

export default function App() {
  return (
    <Frame>
      <Global />
      <TitleBar>
        <QuickBar>
          <Icon n="logo" />
          <QuickSep $m="0 7px 0 11px" $dark />
          {tools("newDoc", "open", "diskFaded", "printer")}
          <QuickSep $m="0 8px" />
          {tools("diskPen", "undo", "redo", "refresh", "refreshOrange")}
          <QuickSep $m="0 14px 0 8px" />
          <Icon n="stack" />
          <Gap $w={3} />
          <Caret $s={2.500} />
          <QuickSep $m="0 0 0 13px" $dark />
        </QuickBar>
        <Title>{"LENS.ZMX - Zemax OpticStudio 20.3.1 DEMO  Premium (7) - DEMO"}</Title>
        <WindowKeys>
          <svg width="12" height="12"><path d="M1 6h10" stroke="#aaa" /></svg>
          <svg width="12" height="12"><path d="M1.500 3.500h7v7h-7zM3.500 3.500v-2h7v7h-2" stroke="#999" fill="none" /></svg>
          <svg width="12" height="12"><path d="M1.500 1l9 9.500M10.500 1l-9 9.500" stroke="#aaa" /></svg>
        </WindowKeys>
      </TitleBar>
      <Tabs>
        <Tab $w={37} $kind="file">File</Tab>
        <Tab $w={51} $kind="on">Setup</Tab>
        <Tab $w={73}>Analyze</Tab>
        <Tab $w={67}>Optimize</Tab>
        <Tab $w={84}>Tolerance</Tab>
        <Tab $w={62}>Libraries</Tab>
        <Tab $w={105}>Part Designer</Tab>
        <Tab $w={91}>Programming</Tab>
        <Tab $w={60}>Help</Tab>
        <Search>
          <SearchBox>Search...</SearchBox>
          <Play />
          <svg width="13" height="14"><circle cx="5" cy="5" r="4" fill="#eef5fb" stroke="#b5c3d0" /><path d="M8 8.500l4.500 5" stroke="#999" strokeWidth="1.800" /></svg>
        </Search>
      </Tabs>
      <Ribbon>
        <Group $w={172}>
          <GroupBody>
            {big(54, "explorer", "System\nExplorer")}
            {big(65, "gear", "Project\nPreferences")}
            {big(48, "scale", "Scale\nLens")}
          </GroupBody>
          <GroupName>System</GroupName>
        </Group>
        <Group $w={122}>
          <GroupBody $pad={8}>
            <SmallCol>
              <Small $on><Icon n="cloud" />Sequential</Small>
              <Small><Icon n="cubes" />Non-Sequential</Small>
            </SmallCol>
          </GroupBody>
          <GroupName>Mode</GroupName>
        </Group>
        <Group $w={209}>
          <GroupBody $pad={5}>
            {big(50, "lensData", "Lens\nData")}
            {big(84, "nsData", "Non-Sequential", { off: true })}
            {big(62, "fieldData", "Field Data\nEditor")}
          </GroupBody>
          <GroupName>Editors<Launcher><Icon n="launcher" s={13} /></Launcher></GroupName>
        </Group>
        <Group $w={185}>
          <GroupBody $pad={9}>
            {big(76, "cross", "Cross-Section")}
            {big(44, "viewer3d", "3D\nViewer")}
            {big(47, "shaded", "Shaded\nModel")}
          </GroupBody>
          <GroupName>System Viewers<Launcher><Icon n="launcher" s={13} /></Launcher></GroupName>
        </Group>
        <Group $w={132}>
          <GroupBody $pad={6}>
            {big(46, "traffic", "System\nCheck")}
            {big(75, "gauge", "Performance")}
          </GroupBody>
          <GroupName>Diagnostics</GroupName>
        </Group>
        <Group $w={191}>
          <GroupBody $pad={5}>
            {big(58, "front", "Bring To\nFront", { caret: true })}
            {big(56, "winOptions", "Window\nOptions", { caret: true })}
            {big(64, "dock", "Dock New\nWindows")}
          </GroupBody>
          <GroupName>Window Control</GroupName>
        </Group>
        <Group $w={249}>
          <GroupBody $pad={5}>
            {big(54, "thermal", "Make\nThermal")}
            {big(57, "conjugate", "Make\nConjugate")}
            {big(48, "addAll", "Add All\nData")}
            <SmallCol>
              <Small><Icon n="sheet" />MC Editor</Small>
              <Small $off><Icon n="nextArrow" />Next</Small>
              <Small $off><Icon n="prevArrow" />Previous</Small>
            </SmallCol>
          </GroupBody>
          <GroupName>Configuration</GroupName>
        </Group>
      </Ribbon>

      <Main>
        <Side>
          <SideHead>
            <HeadText>System Explorer</HeadText>
            <Icon n="help" s={14} />
            <Push />
            <Caret $c="#fff" $s={4} />
          </SideHead>
          <SideUpdate>Update: All Windows<Caret $s={2.500} /></SideUpdate>
          <SideBody>
            <Tree>
              <Node $lvl={0}><Twist />Aperture</Node>
              <Node $lvl={0}><Twist $open />Fields</Node>
              <Btn $w={138} $h={26} $m="7.5px 0 0 44px">Open Field Data Editor</Btn>
              <Node $lvl={1} $mt={9.500}><Twist $open />Settings</Node>
              <Label $mt={8.500}>Type:</Label>
              <Select $mt={3.500}>Angle<Chevron dir="down" /></Select>
              <Label $mt={8}>Normalization:</Label>
              <Select $mt={4}>Radial<Chevron dir="down" /></Select>
              <Btn $w={239} $h={19.500} $m="3px 0 0 30px">Set Vignetting</Btn>
              <Btn $w={239} $h={19.500} $m="3px 0 0 30px">Clear Vignetting</Btn>
              <Node $lvl={1} $mt={4} $ls={-0.07}><Twist />Field 1 (X = 0.00, Y = 0.00, Weight = 1.00)</Node>
              <Node $lvl={1} $ls={-0.07}><Twist />Field 2 (X = 0.00, Y = 2.00, Weight = 1.00)</Node>
              <Node $lvl={1} $ls={-0.07} $on><Twist $open />Field 3 (X = 0.00, Y = 4.00, Weight = 1.00)</Node>
              <Btn $w={81} $h={26} $m="8px 0 9px 26px">Delete Field</Btn>
              {params.map(([k, v]) => (
                <React.Fragment key={k}>
                  <Label $mt={6}>{k}</Label>
                  <Input>{v}</Input>
                </React.Fragment>
              ))}
              <Node $lvl={1} $dim $mt={4.500}><Twist />Add Field</Node>
              {["Wavelengths", "Environment", "Polarization", "Advanced", "Ray Aiming"].map((t) => (
                <Node key={t} $lvl={0}><Twist />{t}</Node>
              ))}
            </Tree>
            <Scroll><Thumb /><Chevron dir="down" s={10} /></Scroll>
          </SideBody>
        </Side>
        <Splitter />
        <Desk>
          <Win $x={279} $y={145} $w={1075} $h={210}>
            <WinTitle><Icon n="sheet" s={14} />Lens Data<WinKeys /></WinTitle>
            <Bar>
              <BarText $w={115}>Update: All Windows</BarText>
              <Caret $s={2.500} />
              <Sep $m="0 0 0 5px" />
              {tools("swirl1", "swirlA", "move", "globe", "contour")}
              <Sep $m="0 1px 0 2px" />
              {tools("axisPlus", "axisX")}
              <Sep $m="0 0 0 1px" />
              {tools("lensTeal", "tiltLens", "cylLens", "prism", "mosaic")}
              <Sep $m="0 1px" />
              <Tool $w={23}><Icon n="ring" /></Tool>
              <Caret $s={2.500} />
              <Tool $w={26}><Icon n="brush" /></Tool>
              <Sep />
              {tools("turnBack", "toggle")}
              <Sep $m="0 0 0 3px" />
              {tools("page", "swap", "inward", "right", "help")}
            </Bar>
            <Band>
              <Round><Chevron dir="down" /></Round>
              <BandText $w={130.500} $pl={5}>{"Surface   2 Properties"}</BandText>
              <Round><Chevron dir="left" /></Round><Gap $w={4} />
              <Round><Chevron dir="right" /></Round>
              <Gap $w={353.500} />
              <BandText $w={107.500}>Configuration 1/1</BandText>
              <Round $off><Chevron dir="left" /></Round><Gap $w={4} />
              <Round $off><Chevron dir="right" /></Round>
            </Band>
            <LensTable />
          </Win>

          <Win $x={883} $y={349} $w={1000} $h={399}>
            <WinTitle><Icon n="sheetField" s={14} />Field Data Editor<WinKeys /></WinTitle>
            <Bar>
              <BarText $w={115}>Update: All Windows</BarText>
              <Caret $s={2.500} />
              <Sep $m="0 0 0 5px" />
              {tools("disk", "folder", "downCurve", "redX")}
              <Sep $m="0 1px" />
              {tools("wand", "sort", "pupil", "pupilFull")}
              <Sep $m="0 1px" />
              {tools("turnBack", "toggle")}
              <Sep $m="0 1px" />
              {tools("swap", "inward", "right", "help")}
            </Bar>
            <Band>
              <Round><Chevron dir="down" /></Round>
              <BandText $w={112} $pl={5}>{"Field   1 Properties"}</BandText>
              <Round $off><Chevron dir="left" /></Round><Gap $w={4} />
              <Round><Chevron dir="right" /></Round>
              <Gap $w={275} />
              <BandText $w={107.500}>Configuration 1/1</BandText>
              <Round $off><Chevron dir="left" /></Round><Gap $w={4} />
              <Round $off><Chevron dir="right" /></Round>
              <Push />
              <span>Field Type: Angle</span>
            </Band>
            <FieldBody>
              <FieldLeft><FieldTable /></FieldLeft>
              <PlotStrip><Round><Chevron dir="right" /></Round><Vertical>Field Plot</Vertical></PlotStrip>
              <PlotPane><PlotFrame><FieldPlot /></PlotFrame></PlotPane>
            </FieldBody>
          </Win>

          <Win $x={284} $y={348} $w={600} $h={409} $frame>
            <WinTitle $active><Icon n="layout" />1: Layout<WinKeys /></WinTitle>
            <Bar $pad={2}>
              <Round $s={16}><Chevron dir="down" /></Round>
              <Gap $w={3} />
              <BarText $w={48}>Settings</BarText>
              <Sep $m="0 1px 0 0" />
              {tools("refresh", "copy", "diskPen", "printerFaded")}
              <Sep $m="0 2px 0 3px" />
              {tools("pencil", "rect", "arrowLine", "line", "bigA", "dim")}
              <Sep $m="0 2px 0 2px" />
              <Tool $on><Icon n="pan" /></Tool>
              {tools("mag")}
              <Sep $m="0 2px 0 2px" />
              {tools("lock")}
              <Sep $m="0 2px 0 3px" />
              <Tool $on><Icon n="fit" /></Tool>
              <Gap $w={1} />
              {tools("cascade", "clockBack")}
              <Sep $m="0 7px 0 2px" />
              <BarText $w={80}>Line Thickness</BarText>
              <Caret $s={2.500} />
              <Sep $m="0 3px 0 6px" />
              {tools("help")}
            </Bar>
            <Sheet>
              <Drawing>
                <LayoutDrawing />
                <Readout>H = 0.035, V = 7.0</Readout>
              </Drawing>
              <Caption>Layout</Caption>
              <Footer>
                <Notes>{"17/10/2020\nTotal Axial Length:  101.70358 mm"}</Notes>
                <Block>
                  <BlockText $big><span>Zemax</span><span>Zemax OpticStudio 20.3.1</span></BlockText>
                  <BlockText><span>LENS.ZMX</span><span>Configuration 1 of 1</span></BlockText>
                </Block>
              </Footer>
            </Sheet>
          </Win>
        </Desk>
      </Main>
      <Status>
        <span />
        <StatusItem>EFFL: 100</StatusItem>
        <StatusItem>WFNO: 4.93783</StatusItem>
        <StatusItem>ENPD: 20</StatusItem>
        <StatusItem>TOTR: 101.704</StatusItem>
      </Status>
    </Frame>
  );
}
